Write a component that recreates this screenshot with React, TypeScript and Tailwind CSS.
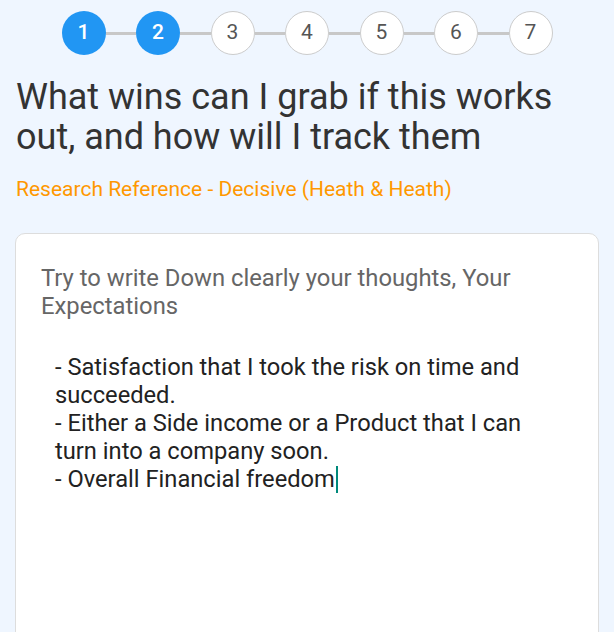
import React from "react";

export default function App() {
  const steps = [1, 2, 3, 4, 5, 6, 7];
  return (
    <div
      className="min-h-[632px] h-[632px] overflow-hidden bg-[#eff6ff] px-[15px] pt-[11px]"
      style={{ fontFamily: "Roboto, 'Noto Sans', sans-serif" }}
    >
      <div className="flex items-center justify-center">
        {steps.map((s, i) => (
          <React.Fragment key={s}>
            {i > 0 && <div className="h-[3px] w-[30.5px] bg-[#c8c8c8]" />}
            <div
              className={
                s <= 2
                  ? "flex h-[44px] w-[44px] items-center justify-center rounded-full bg-[#2196f3] text-[21px] font-medium text-white"
                  : "flex h-[44px] w-[44px] items-center justify-center rounded-full border-[1.5px] border-[#cccccc] bg-white text-[21px] text-[#555555]"
              }
            >
              {s}
            </div>
          </React.Fragment>
        ))}
      </div>
      <h1 className="mt-[22px] pl-[1px] text-[36px] leading-[40px] font-normal text-[#333333]">
        What wins can I grab if this works out, and how will I track them
      </h1>
      <p className="mt-[18px] pl-[1px] text-[21px] leading-[28px] text-[#ff9800]">
        Research Reference - Decisive (Heath &amp; Heath)
      </p>
      <div className="mt-[30px] h-[500px] rounded-[10px] border border-[#dddddd] bg-white pl-[25px] pr-[24px] pt-[30px]">
        <p className="text-[23.8px] leading-[28px] text-[#666666]">
          Try to write Down clearly your thoughts, Your Expectations
        </p>
        <div className="mt-[33px] pl-[14px] text-[23.7px] leading-[28px] text-[#222222]">
          <div>- Satisfaction that I took the risk on time and</div>
          <div>succeeded.</div>
          <div>- Either a Side income or a Product that I can</div>
          <div>turn into a company soon.</div>
          <div className="flex items-center">
            <span>- Overall Financial freedom</span>
            <span className="ml-[1px] inline-block h-[27px] w-[2px] bg-[#00897b]" />
          </div>
        </div>
      </div>
    </div>
  );
}
